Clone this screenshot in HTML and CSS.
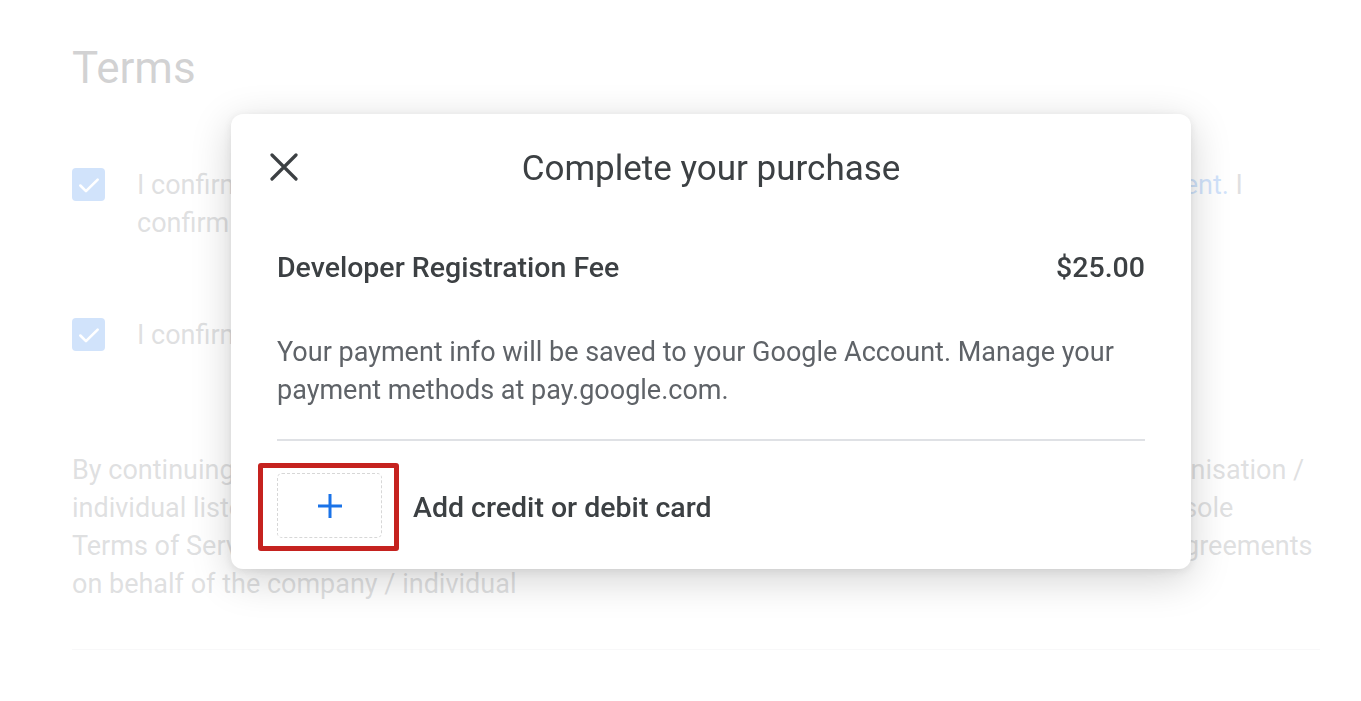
FILE: index.html
```
<!DOCTYPE html>
<html>
<head>
    <meta charset="utf-8">
    <title>Terms</title>
    <link rel="stylesheet" href="styles.css">
</head>
<body>
    <div class="page">
        <h1 class="page-title">Terms</h1>

        <div class="terms-row first">
            <span class="checkbox">
                <svg viewBox="0 0 24 24" width="26" height="26"><path d="M4 12.5l5.2 5.2L20 7" fill="none" stroke="#fff" stroke-width="2.4" stroke-linecap="round" stroke-linejoin="round"/></svg>
            </span>
            <div class="terms-text">
                <span class="line">I confirm that I have read and agree with the <a href="#">Google Play Developer Distribution Agreement.</a> I</span>
                <span class="line">confirm that I have read and agree to the Play Console Terms of Service.</span>
            </div>
        </div>

        <div class="terms-row">
            <span class="checkbox">
                <svg viewBox="0 0 24 24" width="26" height="26"><path d="M4 12.5l5.2 5.2L20 7" fill="none" stroke="#fff" stroke-width="2.4" stroke-linecap="round" stroke-linejoin="round"/></svg>
            </span>
            <div class="terms-text">
                <span class="line">I confirm that I will link my developer account with a Google Payments profile.</span>
            </div>
        </div>

        <p class="legal">
            <span class="line">By continuing, you confirm that you are authorised to register on behalf of the company / organisation /</span>
            <span class="line">individual listed below and that you accept these terms as their representative and you're the sole</span>
            <span class="line">Terms of Service signatory, legally authorised to bind that entity and to also enter into these agreements</span>
            <span class="line">on behalf of the company / individual</span>
        </p>

        <hr class="page-rule">
    </div>

    <!-- purchase dialog sits over the dimmed page -->
    <div class="scrim">
        <div class="dialog">
            <div class="dialog-header">
                <button class="close-btn" type="button" aria-label="Close">
                    <svg viewBox="0 0 28 28" width="28" height="28"><path d="M2 2L26 26M26 2L2 26" stroke="#3c4043" stroke-width="3.2" stroke-linecap="round"/></svg>
                </button>
                <h2>Complete your purchase</h2>
            </div>

            <div class="fee-row">
                <span>Developer Registration Fee</span>
                <span>$25.00</span>
            </div>

            <p class="payment-note">Your payment info will be saved to your Google Account. Manage your payment methods at pay.google.com.</p>

            <div class="divider"></div>

            <div class="add-card">
                <div class="highlight">
                    <div class="card-slot">
                        <svg viewBox="0 0 26 26" width="26" height="26"><path d="M13 1V25M1 13H25" stroke="#1a73e8" stroke-width="3"/></svg>
                    </div>
                </div>
                <span class="add-label">Add credit or debit card</span>
            </div>
        </div>
    </div>
</body>
</html>
```

FILE: styles.css
```
* {
    box-sizing: border-box;
}

body {
    margin: 0;
    font-family: Roboto, 'Noto Sans', sans-serif;
    color: #3c4043;
    background: #fff;
    overflow: hidden;
}

/* page underneath */

.page {
    padding: 38px 41px 0 72px;
}

.page-title {
    margin: 0;
    font-size: 44px;
    font-weight: 400;
    line-height: 60px;
    color: #202124;
}

.terms-row {
    display: flex;
    gap: 32px;
    margin-top: 74px;
}

.terms-row.first {
    margin-top: 68px;
}

.checkbox {
    flex: none;
    width: 33px;
    height: 33px;
    margin-top: 2px;
    border-radius: 4px;
    background: #1a73e8;
    display: flex;
    align-items: center;
    justify-content: center;
}

.terms-text,
.legal {
    font-size: 27px;
    line-height: 38px;
    color: #5f6368;
}

.line {
    display: block;
    white-space: nowrap;
}

.terms-text a {
    color: #1a73e8;
    text-decoration: none;
}

.legal {
    margin: 97px 0 0 0;
}

.page-rule {
    margin: 46px 0 0 0;
    border: none;
    border-top: 1px solid #dadce0;
}

/* dialog */

.scrim {
    position: fixed;
    inset: 0;
    background: rgba(255, 255, 255, 0.8);
}

.dialog {
    position: absolute;
    left: 231px;
    top: 114px;
    width: 960px;
    padding: 0 46px 18px 46px;
    background: #fff;
    border-radius: 12px;
    box-shadow: 0 10px 40px rgba(0, 0, 0, 0.18), 0 2px 8px rgba(0, 0, 0, 0.08);
}

.dialog-header {
    position: relative;
    height: 108px;
    display: flex;
    align-items: center;
    justify-content: center;
}

.dialog-header h2 {
    margin: 0;
    font-size: 35px;
    font-weight: 400;
    color: #3c4043;
}

.close-btn {
    position: absolute;
    left: -7px;
    top: 39px;
    width: 28px;
    height: 28px;
    padding: 0;
    border: none;
    background: none;
    cursor: pointer;
}

.close-btn svg {
    display: block;
}

.fee-row {
    display: flex;
    justify-content: space-between;
    margin-top: 26px;
    font-size: 28.5px;
    font-weight: 500;
    line-height: 40px;
    color: #3c4043;
}

.payment-note {
    margin: 45px 0 0 0;
    font-size: 27px;
    line-height: 38px;
    color: #5f6368;
}

.divider {
    margin-top: 30px;
    height: 2px;
    background: #dfe1e5;
}

.add-card {
    display: flex;
    align-items: center;
    gap: 14px;
    margin-top: 22px;
    margin-left: -19px;
}

.highlight {
    padding: 5px 12px 8px 14px;
    border: 5px solid #c5221f;
    border-radius: 3px;
}

.card-slot {
    width: 105px;
    height: 65px;
    border: 1.5px dashed #d7d7d7;
    border-radius: 5px;
    display: flex;
    align-items: center;
    justify-content: center;
}

.add-label {
    font-size: 28.5px;
    font-weight: 500;
    color: #3c4043;
}
```
